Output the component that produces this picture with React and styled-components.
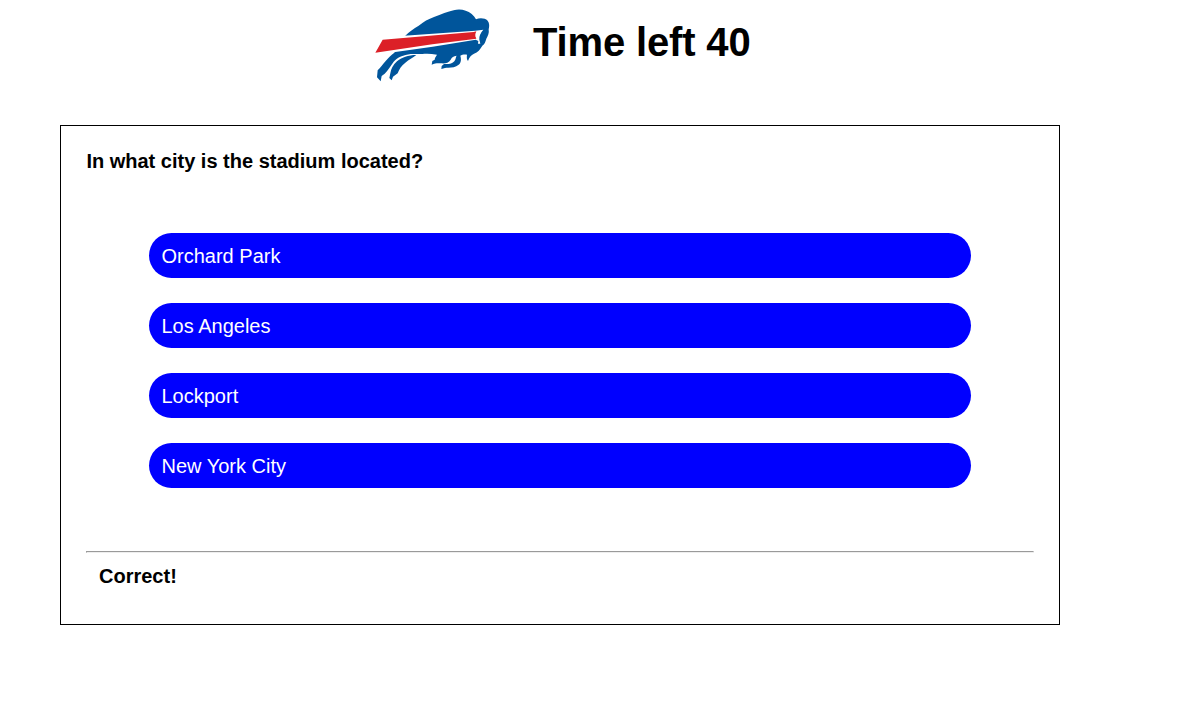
import React from "react";
import styled, { createGlobalStyle } from "styled-components";

const GlobalStyle = createGlobalStyle`
  * { box-sizing: border-box; }
  body {
    margin: 0;
    background: #fff;
    color: #000;
    font-family: "Liberation Sans", Arial, Helvetica, sans-serif;
    font-size: 20px;
    line-height: 23px;
  }
`;

const Header = styled.header`
  display: flex;
  align-items: flex-start;
  height: 125px;
  padding-left: 365px;
`;

const Logo = styled.svg`
  display: block;
  width: 135px;
  height: 90px;
`;

const Timer = styled.h1`
  margin: 19px 0 0 33px;
  font-size: 40px;
  line-height: 46px;
  font-weight: bold;
  letter-spacing: -0.15px;
  white-space: nowrap;
`;

const Card = styled.main`
  display: flex;
  flex-direction: column;
  width: 1000px;
  height: 500px;
  margin-left: 60px;
  padding: 23.5px 25px 0;
  border: 1px solid #000;
`;

const Question = styled.h2`
  margin: 0 0 0 0.4px;
  font-size: 20px;
  line-height: 23px;
  font-weight: bold;
`;

const Choices = styled.ul`
  display: flex;
  flex-direction: column;
  gap: 25px;
  margin: 60.5px 63px 0;
  padding: 0;
  list-style: none;
`;

const Choice = styled.li`
  height: 45px;
  padding: 12px 12.5px 10px;
  border-radius: 25px;
  background: #0000ff;
  color: #fff;
`;

const Divider = styled.hr`
  width: 100%;
  height: 2px;
  margin: 63px 0 0;
  border: 1px solid;
  border-color: #9a9a9a #eee #eee #9a9a9a;
`;

const Feedback = styled.p`
  margin: 12px 0 0 13px;
  font-weight: bold;
`;

const answers = ["Orchard Park", "Los Angeles", "Lockport", "New York City"];

function BuffaloLogo() {
  return (
    <Logo viewBox="0 0 405 270" role="img" aria-label="Buffalo">
      <path
        fill="#00559b"
        d="M121 107 C132 95 146 86 161 77 C176 65 190 57 207 51 C229 43 248 35 266 31 C278 27 291 28 302 32 C315 36 327 46 333 58 C344 53 360 54 368 62 C374 70 373 79 371 88 C373 99 369 108 364 116 C361 126 359 132 352 137 C346 148 338 157 327 161 C318 165 313 172 309 183 C305 177 305 172 306 164 C299 163 290 164 286 167 C289 176 289 188 281 194 C272 201 261 203 250 203 C243 203 237 204 229 207 L230 198 L237 192 C249 193 262 192 268 184 C273 178 272 170 275 167 C265 168 261 171 257 179 C251 190 239 191 228 190 C217 189 210 190 200 194 L202 183 L209 179 L210 174 L216 164 C200 161 184 160 172 162 L137 162 C116 165 97 172 86 185 C77 197 68 212 59 221 L50 228 L47 244 L36 232 L38 211 C46 203 53 193 62 183 C70 173 79 165 88 158 Z"
      />
      <path
        fill="#00559b"
        d="M154 165 C130 165 109 173 96 184 C84 195 78 207 76 220 L73 234 L80 241 L84 230 L98 220 C102 208 110 196 121 188 C132 179 143 174 154 165 Z"
      />
      <path
        fill="#fff"
        d="M52 115 L118 107 L331 92 L355 89 C346 99 342 108 343 119 L346 131 L339 131 L340 123 L332 119 L203 140 L91 156 L29 160 Z"
      />
      <path
        fill="#dc2027"
        d="M53 119 L326 96 L334 94 L331 102 L331 109 L334 116 L202 133 L31 158 Z"
      />
    </Logo>
  );
}

export default function App() {
  return (
    <>
      <GlobalStyle />
      <Header>
        <BuffaloLogo />
        <Timer>Time left 40</Timer>
      </Header>
      <Card>
        <Question>In what city is the stadium located?</Question>
        <Choices>
          {answers.map((answer) => (
            <Choice key={answer}>{answer}</Choice>
          ))}
        </Choices>
        <Divider />
        <Feedback>Correct!</Feedback>
      </Card>
    </>
  );
}
